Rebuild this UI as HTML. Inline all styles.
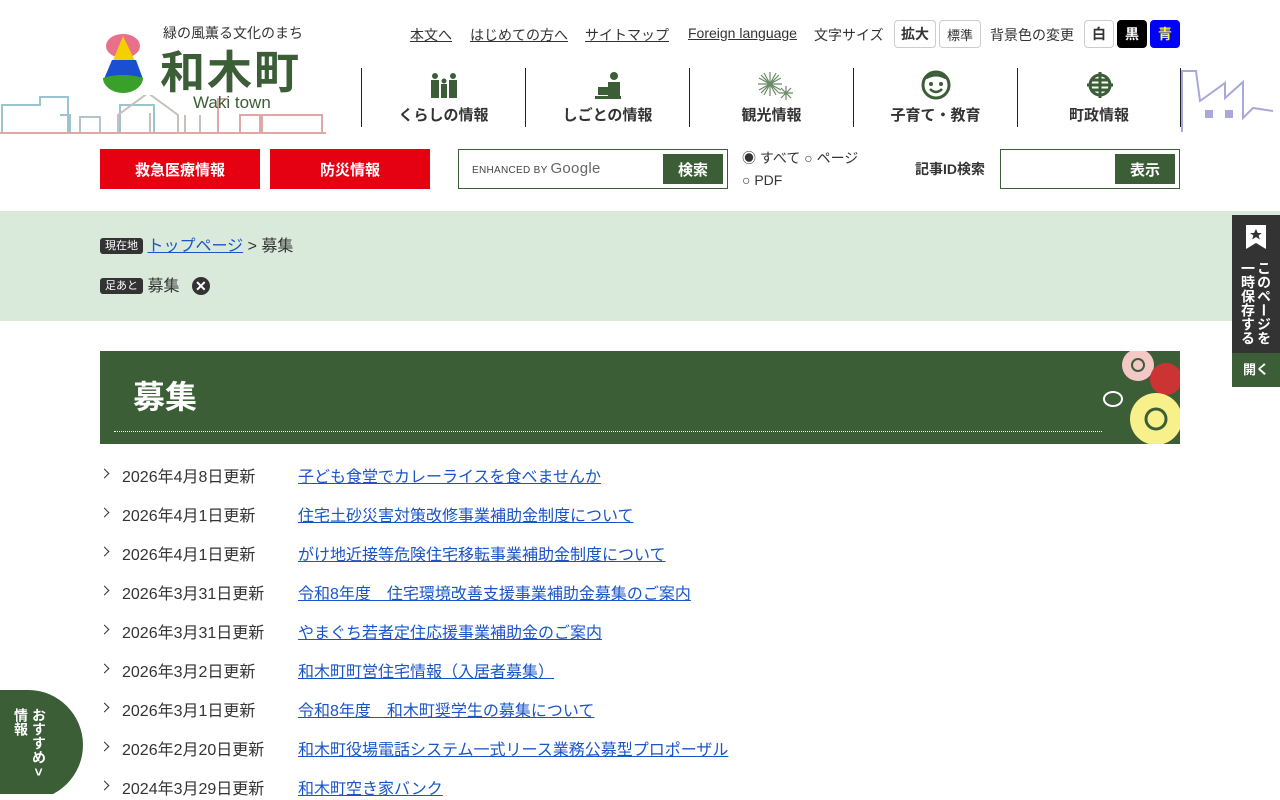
<!DOCTYPE html>
<html><head><meta charset="utf-8"><style>
*{box-sizing:border-box;margin:0;padding:0}
body{width:1280px;height:800px;overflow:hidden;position:relative;background:#fff;font-family:"Liberation Sans","Noto Sans CJK JP",sans-serif;color:#333}
.abs{position:absolute}
a{color:#333;text-decoration:underline}
.tl{top:25px;font-size:14px;white-space:nowrap}
.btn{border:1px solid #ccc;border-radius:4px;height:28px;top:20px;font-size:13px;display:flex;align-items:center;justify-content:center}
.nav{top:68px;height:59px;border-left:1px solid #222;width:164px;text-align:center}
.nav span{position:absolute;top:36px;left:0;right:0;font-size:15px;font-weight:bold;color:#333}
.nav svg{position:absolute;left:66px;top:2px}
.red{background:#e50012;color:#fff;font-weight:bold;font-size:15px;display:flex;align-items:center;justify-content:center;top:149px;height:40px;width:160px}
.gbtn{background:#3b5e37;color:#fff;font-weight:bold;font-size:15px;display:flex;align-items:center;justify-content:center}
.row{left:100px;font-size:16px;height:20px;white-space:nowrap}
.row .d{position:absolute;left:22px}
.row a{position:absolute;left:198px;color:#1a55c8}
.row i{position:absolute;left:1px;top:7px;width:7px;height:7px;border-right:1.5px solid #333;border-top:1.5px solid #333;transform:rotate(45deg)}
.tag{background:#333;color:#fff;font-size:11px;border-radius:3px;padding:2px 5px;vertical-align:2px}
</style></head><body>
<svg class="abs" style="left:0;top:95px" width="330" height="40"><g fill="none" stroke-width="2">
<path d="M2 38V10h38V2h28v36M60 20h10v18M120 38V10h34v28" stroke="#9cc4d0"/>
<path d="M80 38V22h20v16" stroke="#b5c4c8"/>
<path d="M118 38V20l30-22 30 22v18M150 38V18M185 38V20M200 38V20" stroke="#c8c0bc"/>
<path d="M218 38V4h10M240 38V20h20v18M262 38V20h60v18M0 38h326" stroke="#dfa8a8"/></g></svg>
<svg class="abs" style="left:1180px;top:68px" width="100" height="66"><path d="M2 64V3h14l4 30 25-18v15l18-16v36l10-10 20 3" fill="none" stroke="#a8a8dc" stroke-width="2"/><rect x="25" y="42" width="8" height="8" fill="#a8a8dc"/><rect x="45" y="42" width="8" height="8" fill="#a8a8dc"/></svg>
<svg class="abs" style="left:100px;top:33px" width="46" height="62"><ellipse cx="23" cy="13" rx="17" ry="12" fill="#e9708a"/><path d="M23 3 12 30h24z" fill="#f5d000"/><path d="M12 27h24l7 19H4z" fill="#1a4fd1"/><path d="M3 45c12-4 28-4 40 0 0 8-9 15-20 15S3 53 3 45z" fill="#39a12a"/></svg>
<div class="abs" style="left:163px;top:23px;font-size:14px;color:#333">緑の風薫る文化のまち</div>
<div class="abs" style="left:160px;top:36px;font-size:45px;font-weight:bold;color:#3b5e37;letter-spacing:2px">和木町</div>
<div class="abs" style="left:193px;top:93px;font-size:17px;color:#3b5e37">Waki town</div>
<a class="abs tl" style="left:410px">本文へ</a>
<a class="abs tl" style="left:470px">はじめての方へ</a>
<a class="abs tl" style="left:585px">サイトマップ</a>
<a class="abs tl" style="left:688px">Foreign language</a>
<div class="abs tl" style="left:814px">文字サイズ</div>
<div class="abs btn" style="left:894px;width:42px;font-weight:bold;font-size:14px">拡大</div>
<div class="abs btn" style="left:939px;width:42px">標準</div>
<div class="abs tl" style="left:990px">背景色の変更</div>
<div class="abs btn" style="left:1084px;width:30px;font-weight:bold;font-size:14px">白</div>
<div class="abs btn" style="left:1117px;width:30px;background:#000;color:#fff;border-color:#000;font-weight:bold;font-size:14px">黒</div>
<div class="abs btn" style="left:1150px;width:30px;background:#00f;color:#ff0;border-color:#00f;font-weight:bold;font-size:14px">青</div>
<div class="abs nav" style="left:361px"><svg width="32" height="30"><g fill="#3b5e37"><circle cx="7" cy="6" r="3"/><circle cx="25" cy="6" r="3"/><circle cx="16" cy="11" r="2.5"/><rect x="3" y="10" width="8" height="18"/><rect x="21" y="10" width="8" height="18"/><rect x="13" y="14" width="6" height="14"/></g></svg><span>くらしの情報</span></div>
<div class="abs nav" style="left:525px"><svg width="32" height="30"><g fill="#3b5e37"><circle cx="22" cy="6" r="4"/><path d="M16 12h12v14H16z"/><rect x="3" y="26" width="26" height="3"/><path d="M6 17h11v8H6z"/></g></svg><span>しごとの情報</span></div>
<div class="abs nav" style="left:689px"><svg width="40" height="32"><g stroke="#6a8a66" stroke-width="1.2"><path d="M14 2v24M2 14h24M5 5l18 18M23 5 5 23M8 3l12 22M20 3 8 25M3 8l22 12M25 8 3 20"/><path d="M30 16v14M23 23h14M25 18l10 10M35 18 25 28"/></g></svg><span>観光情報</span></div>
<div class="abs nav" style="left:853px"><svg width="32" height="30"><circle cx="16" cy="15" r="13" fill="none" stroke="#3b5e37" stroke-width="3"/><circle cx="11" cy="14" r="2" fill="#3b5e37"/><circle cx="21" cy="14" r="2" fill="#3b5e37"/><path d="M10 19q6 6 12 0" fill="none" stroke="#3b5e37" stroke-width="2.5"/><path d="M6 8q10-6 20 0" fill="none" stroke="#3b5e37" stroke-width="3"/></svg><span>子育て・教育</span></div>
<div class="abs nav" style="left:1017px;border-right:1px solid #222"><svg width="32" height="30"><circle cx="16" cy="15" r="10" fill="none" stroke="#3b5e37" stroke-width="3"/><path d="M16 2v26M3 15h26M7 10h18M7 20h18" stroke="#3b5e37" stroke-width="3"/></svg><span>町政情報</span></div>
<div class="abs red" style="left:100px">救急医療情報</div>
<div class="abs red" style="left:270px">防災情報</div>
<div class="abs" style="left:458px;top:149px;width:270px;height:40px;border:1px solid #3b5e37"><span class="abs" style="left:13px;top:10px;font-size:10px;color:#444;letter-spacing:.3px">ENHANCED BY <b style="font-size:15px;font-weight:normal;color:#666">Google</b></span><div class="abs gbtn" style="left:204px;top:4px;width:60px;height:30px">検索</div></div>
<div class="abs" style="left:742px;top:147px;font-size:14px;line-height:22px"><div>◉ すべて ○ ページ</div><div>○ PDF</div></div>
<div class="abs" style="left:915px;top:159px;font-size:14px;font-weight:bold">記事ID検索</div>
<div class="abs" style="left:1000px;top:149px;width:180px;height:40px;border:1px solid #3b5e37"><div class="abs gbtn" style="left:114px;top:4px;width:60px;height:30px">表示</div></div>
<div class="abs" style="left:0;top:211px;width:1280px;height:110px;background:#d9eadb"></div>
<div class="abs" style="left:100px;top:232px;font-size:16px"><span class="tag">現在地</span> <a style="color:#1a55c8">トップページ</a> &gt; 募集</div>
<div class="abs" style="left:100px;top:272px;font-size:16px"><span class="tag">足あと</span> 募集 <span style="display:inline-block;width:18px;height:18px;border-radius:50%;background:#333;color:#fff;font-size:14px;text-align:center;line-height:18px;margin-left:8px;font-weight:bold">✕</span></div>
<div class="abs" style="left:1232px;top:215px;width:48px;height:138px;background:#333"><svg class="abs" style="left:14px;top:10px" width="20" height="24"><path d="M0 0h20v24l-10-6-10 6z" fill="#fff"/><path d="M10 4l1.8 4h4l-3.2 2.5 1.2 4L10 12l-3.8 2.5 1.2-4L4 8h4z" fill="#333"/></svg><div class="abs" style="left:8px;top:46px;writing-mode:vertical-rl;color:#fff;font-size:14px;font-weight:bold;line-height:16px">このページを一時保存する</div></div>
<div class="abs" style="left:1232px;top:353px;width:48px;height:34px;background:#3b5e37;color:#fff;font-size:13px;font-weight:bold;text-align:center;line-height:34px">開く</div>
<div class="abs" style="left:100px;top:351px;width:1080px;height:93px;background:#3b5e37;overflow:hidden"><div class="abs" style="left:33px;top:21px;font-size:32px;font-weight:bold;color:#fff">募集</div><div class="abs" style="left:14px;top:80px;width:988px;border-top:1px dotted #fff"></div>
<svg class="abs" style="left:998px;top:0" width="82" height="93"><circle cx="40" cy="14" r="16" fill="#f5c8c8"/><circle cx="40" cy="14" r="6" fill="none" stroke="#3b5e37" stroke-width="2"/><circle cx="68" cy="28" r="16" fill="#c33"/><circle cx="58" cy="68" r="26" fill="#f8f08a"/><circle cx="58" cy="68" r="10" fill="none" stroke="#3b5e37" stroke-width="3"/><ellipse cx="15" cy="48" rx="9" ry="7" fill="none" stroke="#fff" stroke-width="2"/></svg></div>
<div class="abs row" style="top:463px"><i></i><span class="d">2026年4月8日更新</span><a>子ども食堂でカレーライスを食べませんか</a></div>
<div class="abs row" style="top:502px"><i></i><span class="d">2026年4月1日更新</span><a>住宅土砂災害対策改修事業補助金制度について</a></div>
<div class="abs row" style="top:541px"><i></i><span class="d">2026年4月1日更新</span><a>がけ地近接等危険住宅移転事業補助金制度について</a></div>
<div class="abs row" style="top:580px"><i></i><span class="d">2026年3月31日更新</span><a>令和8年度　住宅環境改善支援事業補助金募集のご案内</a></div>
<div class="abs row" style="top:619px"><i></i><span class="d">2026年3月31日更新</span><a>やまぐち若者定住応援事業補助金のご案内</a></div>
<div class="abs row" style="top:658px"><i></i><span class="d">2026年3月2日更新</span><a>和木町町営住宅情報（入居者募集）</a></div>
<div class="abs row" style="top:697px"><i></i><span class="d">2026年3月1日更新</span><a>令和8年度　和木町奨学生の募集について</a></div>
<div class="abs row" style="top:736px"><i></i><span class="d">2026年2月20日更新</span><a>和木町役場電話システム一式リース業務公募型プロポーザル</a></div>
<div class="abs row" style="top:775px"><i></i><span class="d">2024年3月29日更新</span><a>和木町空き家バンク</a></div>
<div class="abs" style="left:-40px;top:690px;width:123px;height:110px;background:#3b5e37;border-radius:0 60px 60px 0"></div>
<div class="abs" style="left:0;top:794px;width:60px;height:6px;background:#fff"></div>
<div class="abs" style="left:12px;top:708px;writing-mode:vertical-rl;color:#fff;font-size:14px;font-weight:bold;line-height:18px;height:72px">おすすめ &gt;情報</div>
</body></html>
